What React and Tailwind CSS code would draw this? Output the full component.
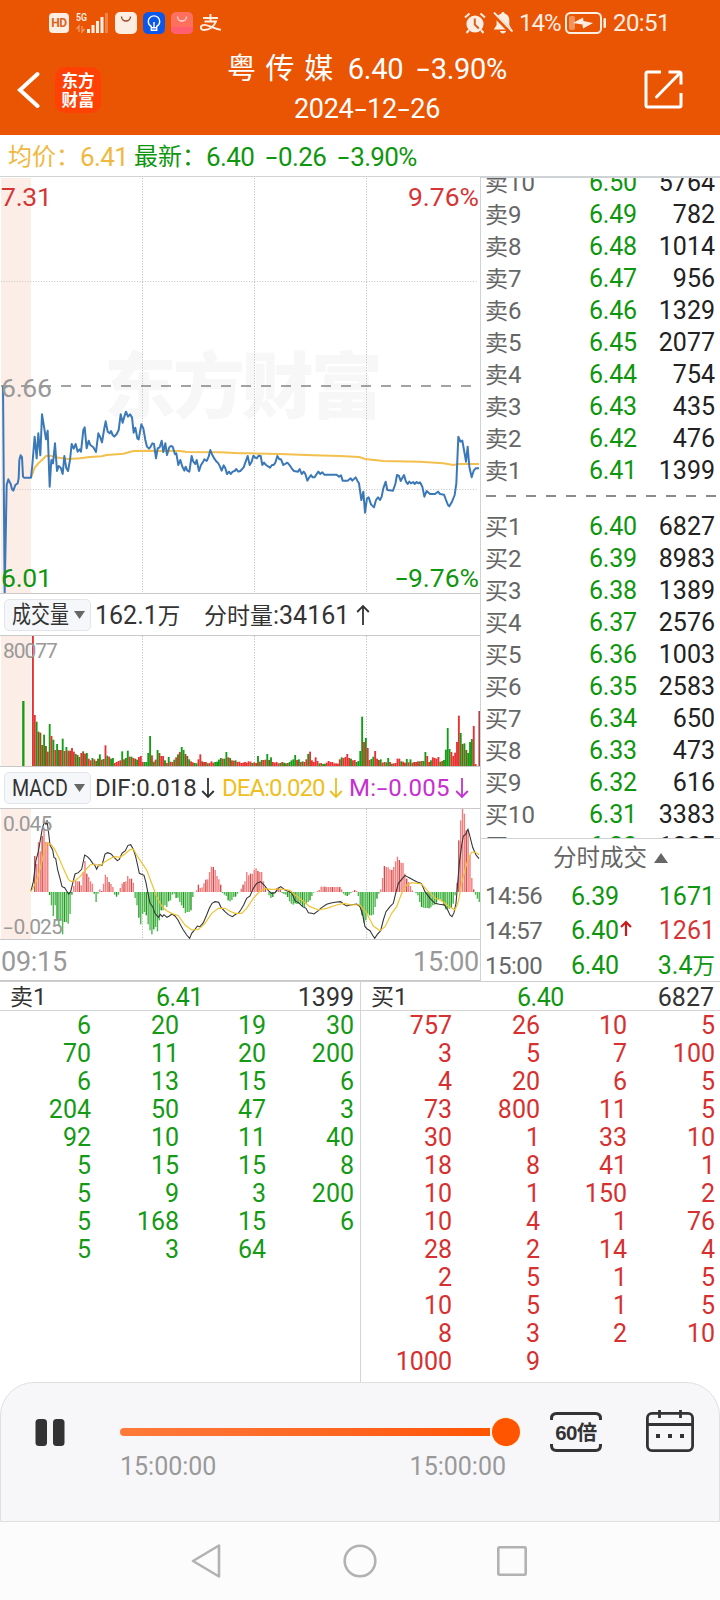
import React from "react";

const PRICE =
  "9,648 14,1268 20,945 25,928 32,942 36,958 40,962 46,945 53,940 56,925 58,870 62,856 66,862 69,920 72,923 93,923 97,885 104,800 110,865 115,790 121,856 126,733 132,770 138,808 143,782 149,950 154,870 159,880 165,820 171,903 176,888 182,893 188,912 193,858 199,895 204,903 210,870 215,822 221,836 227,822 233,845 239,838 243,845 250,780 254,772 260,835 266,812 271,825 280,832 288,846 295,790 300,800 306,817 312,780 317,754 323,785 329,790 333,783 338,795 343,800 350,792 356,780 362,733 368,758 373,740 378,725 384,740 390,733 396,742 401,788 406,773 412,805 416,808 424,763 430,775 436,810 441,830 447,836 452,830 457,820 462,822 468,865 473,835 479,832 485,812 490,846 496,820 501,855 508,832 513,828 518,830 525,853 529,850 535,885 541,870 547,890 553,902 557,890 562,902 568,905 575,858 580,875 586,882 590,870 597,903 603,885 608,878 613,868 620,873 626,860 631,840 637,855 643,866 648,873 655,880 660,890 665,902 671,886 676,895 681,912 687,905 692,912 698,905 704,903 709,897 715,905 721,903 731,892 737,875 743,858 749,885 755,875 760,857 765,862 770,865 776,857 782,858 787,885 792,878 798,885 810,893 816,885 821,885 826,878 832,858 838,868 843,868 850,885 862,878 870,887 875,895 882,903 894,905 899,897 905,912 911,905 916,912 922,932 928,922 933,915 938,922 944,922 950,912 955,905 961,912 967,907 973,914 1010,914 1017,920 1023,916 1028,932 1043,932 1052,925 1057,932 1067,922 1072,932 1077,940 1084,990 1090,965 1095,1028 1101,985 1106,982 1113,1003 1122,1012 1128,990 1134,982 1140,990 1145,980 1150,955 1157,935 1162,960 1179,962 1186,942 1191,915 1197,918 1202,933 1212,915 1218,935 1223,942 1228,935 1233,940 1240,936 1244,942 1250,936 1255,940 1260,937 1267,950 1273,980 1280,963 1290,972 1305,972 1314,965 1320,972 1332,974 1338,990 1344,1005 1348,1009 1356,995 1364,975 1369,940 1375,800 1381,815 1387,812 1392,840 1398,875 1403,830 1408,890 1415,922 1421,902 1427,895 1437,895";
const AVERAGE =
  "93,923 104,893 115,880 126,870 138,858 152,857 165,862 205,867 240,865 270,861 305,859 320,855 370,851 400,843 450,842 540,843 560,846 660,847 720,850 750,850 840,852 940,856 1020,858 1078,861 1095,867 1150,873 1260,875 1330,880 1360,885 1377,882 1437,882";
const DIF =
  "93,903 100,875 108,810 115,785 121,750 127,715 133,697 138,703 141,690 146,730 150,765 158,780 162,803 167,805 173,840 180,865 186,890 194,893 200,903 206,912 212,905 218,880 225,852 235,848 245,838 254,795 262,800 270,808 278,820 284,825 290,838 296,825 306,826 315,792 323,788 333,792 342,802 352,812 358,808 366,790 376,782 384,766 392,764 400,778 407,800 412,822 418,850 432,856 438,878 443,905 450,940 458,950 465,970 475,982 481,973 487,980 492,974 501,982 508,978 516,972 525,978 534,990 542,1006 550,1020 560,1035 569,1045 575,1030 585,1018 592,1008 600,1010 610,998 620,975 628,955 636,940 645,935 656,937 663,952 675,965 685,974 697,980 708,972 715,970 722,960 731,945 740,925 750,918 760,895 770,880 782,875 795,888 805,902 815,910 825,908 835,895 842,890 855,900 868,905 875,908 885,932 895,938 908,950 918,955 925,968 935,970 942,972 955,962 965,953 980,943 990,940 1005,937 1022,935 1030,942 1040,948 1050,945 1070,942 1080,950 1088,975 1095,1010 1103,1018 1110,1022 1118,1036 1124,1045 1132,1033 1142,1022 1150,990 1158,965 1170,950 1180,940 1187,910 1195,880 1205,868 1215,856 1225,862 1240,870 1250,875 1264,880 1275,905 1290,925 1305,940 1318,943 1333,945 1342,958 1350,975 1356,980 1362,968 1368,940 1373,880 1378,820 1385,765 1390,738 1397,733 1404,718 1410,740 1418,772 1428,795 1437,806";
const DEA =
  "93,905 105,883 115,858 125,818 135,770 142,758 152,763 163,776 175,800 190,835 205,868 213,875 225,872 240,860 255,842 270,825 285,822 300,828 315,815 330,806 345,800 360,802 375,792 388,780 400,777 410,795 425,818 440,840 455,880 470,920 485,948 500,962 515,970 535,977 555,1005 575,1020 595,1018 615,1000 635,970 655,955 675,955 690,964 705,970 725,970 740,955 760,925 780,903 795,896 815,898 845,897 870,901 885,915 905,930 930,950 955,960 980,955 1010,945 1030,940 1050,944 1080,945 1100,970 1120,1008 1140,1022 1155,1010 1175,970 1190,950 1205,910 1220,885 1235,878 1265,882 1285,905 1305,925 1325,932 1345,948 1365,960 1375,935 1385,880 1395,840 1405,805 1415,787 1425,786 1437,794";

// One entry per minute: bar height and its tone (R up, G down, B overlapped, D last).
const VOLUME =
  "390R 153R 133G 103B 100B 63B 94G 60B 43R 126G 90R 79G 48R 66G 48B 48R 82G 45R 57G 46R 46B 54R 43R 36G 33B 27G 39R 44B 37R 39G 22R 17R 24G 20R 15G 22B 35G 19R 21G 62R 31G 28R 22G 24G 9R 12R 15R 17R 44G 20R 24G 46G 28R 28G 24R 22B 19G 27R 30R 12R 12G 12G 39G 90G 32R 13G 19R 48G 39B 30R 30R 17G 9R 27G 13R 12R 19G 26R 35G 42R 57G 48G 36B 30B 20G 14R 11R 9G 8G 20R 35R 14B 12R 12R 8G 9R 14R 10R 12G 13G 19G 24G 22R 22G 42G 26R 24G 17R 16R 17G 12R 13R 9R 10R 12R 10R 14R 13R 9G 11R 9R 30G 13R 18G 18R 19R 36G 18B 26G 12R 10R 12R 8R 9G 12R 10G 8G 9R 12G 17G 20G 33G 18R 20G 12R 14G 12R 20R 36G 43R 17R 12R 26R 15R 8G 9R 6G 7G 10R 15R 12R 12R 8R 8R 7R 20R 26G 24R 27R 36R 24R 22G 17R 18R 12G 15G 45G 148G 72R 84G 54R 18R 21G 28G 45R 22R 18B 20G 10R 12R 11G 24G 12R 7G 8R 9R 22R 22R 14G 13R 10R 21G 11R 20G 10R 12B 12R 14R 14G 15R 15G 42G 30R 12R 17G 26R 24R 22R 27R 13G 15R 18G 49G 114G 51G 42R 30R 40R 72R 151R 99G 66B 68G 48B 39G 72G 81G 120R 6R 0R 165D".split(" ");
const TONES = { R: "#ea3030", G: "#149c14", B: "#87571a", D: "#b04444" };

const HISTOGRAM = [
  0, 108, 84, 150, 122, 168, 190, 150, 150, -9, -40, -72, -40, -84, -100, -85, -127, -90, -90, -95, -66, -8, 18, 35, 32, 32, 20, 60, 93, 55, 45, 32, 25, -5, -30, -5, 8, 3, 25, 52, 45, 30, 24, 15, -8, -14, -8, 12, 25, 30, 32, 48, 40, 40, 28, -18, -40, -77, -97, -66, -60, -70, -97, -115, -127, -112, -105, -118, -85, -55, -55, -40, -45, -28, -25, -8, -5, -18, -17, -30, -40, -48, -63, -60, -60, -55, -15, 0, 5, 22, 12, 14, 26, 37, 38, 60, 76, 75, 66, 48, 38, 22, -3, -8, -12, -25, -28, -24, -15, -14, -5, 0, 10, 22, 32, 60, 50, 55, 55, 67, 71, 63, 60, 60, 32, 14, 0, -10, -18, -15, -4, 12, 15, 8, -3, -6, -8, -15, -28, -35, -38, -34, -36, -35, -35, -42, -45, -35, -30, -25, -12, -2, 0, 2, 6, 16, 16, 16, 15, 15, 15, 15, 15, 15, 15, 15, 8, -5, -10, -12, -8, -3, 2, 6, 3, -12, -40, -70, -92, -85, -65, -70, -70, -68, -45, -20, -5, 8, 42, 78, 75, 74, 68, 66, 75, 92, 106, 96, 88, 87, 55, 40, 30, 18, 5, 0, -3, -10, -30, -45, -47, -48, -48, -49, -46, -40, -38, -32, -22, -22, -28, -40, -52, -50, -50, -48, -35, -10, 28, 155, 215, 250, 235, 185, 180, 110, 42, 8, -8, -20, -30,
];

const PITCH = 5.58;
const slotX = (i) => 96 + i * PITCH;

const ASKS = [
  ["卖10", "6.50", "5764"], ["卖9", "6.49", "782"], ["卖8", "6.48", "1014"], ["卖7", "6.47", "956"], ["卖6", "6.46", "1329"],
  ["卖5", "6.45", "2077"], ["卖4", "6.44", "754"], ["卖3", "6.43", "435"], ["卖2", "6.42", "476"], ["卖1", "6.41", "1399"],
];
const BIDS = [
  ["买1", "6.40", "6827"], ["买2", "6.39", "8983"], ["买3", "6.38", "1389"], ["买4", "6.37", "2576"], ["买5", "6.36", "1003"],
  ["买6", "6.35", "2583"], ["买7", "6.34", "650"], ["买8", "6.33", "473"], ["买9", "6.32", "616"], ["买10", "6.31", "3383"], ["买11", "6.30", "1335"],
];
const SELL_ORDERS = [
  [6, 20, 19, 30], [70, 11, 20, 200], [6, 13, 15, 6], [204, 50, 47, 3], [92, 10, 11, 40],
  [5, 15, 15, 8], [5, 9, 3, 200], [5, 168, 15, 6], [5, 3, 64, ""],
];
const BUY_ORDERS = [
  [757, 26, 10, 5], [3, 5, 7, 100], [4, 20, 6, 5], [73, 800, 11, 5], [30, 1, 33, 10], [18, 8, 41, 1], [10, 1, 150, 2],
  [10, 4, 1, 76], [28, 2, 14, 4], [2, 5, 1, 5], [10, 5, 1, 5], [8, 3, 2, 10], [1000, 9, "", ""],
];

// Figures with a wide minus sign.
function Num({ children }) {
  return String(children)
    .split(/(-)/)
    .map((part, i) =>
      part === "-" ? (
        <span key={i} className="inline-block w-[0.5em] scale-x-[1.6] text-center tracking-normal">-</span>
      ) : (
        part
      )
    );
}

function Arrow({ up = false }) {
  return (
    <svg className="h-[22px] w-[14px] shrink-0" viewBox="0 0 14 22" fill="none" stroke="currentColor" strokeWidth="1.8">
      <path d={up ? "M7 21V2M1.2 8 7 2l5.800 6" : "M7 1v19M1.2 14 7 20l5.800-6"} />
    </svg>
  );
}

function VerticalGrid({ top, bottom }) {
  return (
    <g stroke="#b9b9b9" strokeWidth="3" strokeDasharray="3 5">
      {[427.5, 763.5, 1099.5].map((x) => (
        <line key={x} x1={x} x2={x} y1={top} y2={bottom} />
      ))}
    </g>
  );
}

function StatusBar() {
  return (
    <div className="flex h-[46px] items-center pl-[49px] pr-[50px] text-[#fdeee4]">
      <div className="flex h-5 w-5 items-center justify-center rounded-[4px] bg-[#fdeee4] text-[12px] font-bold leading-none tracking-tight text-[#d9621f]">
        HD
      </div>
      <svg className="ml-[7px] h-[22px] w-[33px]" viewBox="0 0 33 22">
        <text x="0" y="9" fill="currentColor" fontSize="10.5" fontWeight="600" fontFamily="Roboto" textLength="11" lengthAdjust="spacingAndGlyphs">5G</text>
        <g fill="currentColor">
          <rect x="11" y="17" width="3" height="4" />
          <rect x="15.500" y="13" width="3" height="8" />
          <rect x="20" y="9" width="3" height="12" />
          <rect x="24.500" y="5" width="3" height="16" />
          <rect x="29" y="1" width="3" height="20" opacity=".3" />
        </g>
        <path d="M3 20v-6l-2.500 3M6 14v6l2.500-3" stroke="currentColor" strokeWidth="1.300" fill="none" opacity=".45" />
      </svg>
      <svg className="ml-[6px] h-[22px] w-[22px]" viewBox="0 0 22 22">
        <rect width="22" height="22" rx="5" fill="#fdeee4" />
        <path d="M6.500 4.500a4.500 4.500 0 0 0 9 0" stroke="#a04a28" strokeWidth="1.400" fill="none" />
      </svg>
      <svg className="ml-[6px] h-[22px] w-[22px]" viewBox="0 0 22 22" fill="none" stroke="#fff" strokeWidth="1.400">
        <rect width="22" height="22" rx="5.500" fill="#0b57ea" stroke="none" />
        <path d="M8.300 14.500c-2-1-3-2.800-3-4.900a5.700 5.700 0 0 1 11.400 0c0 2.100-1 3.900-3 4.900v3.800H8.300zM8.300 15.800h5.400M11 12v3" />
        <circle cx="11" cy="11" r="1" fill="#fff" stroke="none" />
      </svg>
      <svg className="ml-[6px] h-[22px] w-[22px]" viewBox="0 0 22 22">
        <rect width="22" height="22" rx="5" fill="#ff6f5e" />
        <path d="M0 15h22v2a5 5 0 0 1-5 5H5a5 5 0 0 1-5-5z" fill="#ff5f70" />
        <path d="M6.500 4.500a4.500 4.500 0 0 0 9 0" stroke="#ffd9ce" strokeWidth="1.300" fill="none" />
      </svg>
      <svg className="ml-[7px] h-[18px] w-[22px]" viewBox="0 0 22 18" fill="none" stroke="currentColor" strokeWidth="1.900">
        <path d="M3 4h15M10.500 0v7.500M4.500 7.500h11.500c-1.500 4-6 8.500-11.500 8.500-2.500 0-3.600-1.200-3.600-2.500 0-1.500 1.400-2.600 3.600-2.600 4 0 8 3.500 16.500 5" />
      </svg>
      <div className="ml-auto flex items-center">
        <svg className="h-[22px] w-[22px]" viewBox="0 0 22 22">
          <circle cx="11" cy="12" r="8.600" fill="currentColor" />
          <path d="M1 5.500 5.500 1.500M21 5.500l-4.500-4M5 18l-2.500 3M17 18l2.500 3" stroke="currentColor" strokeWidth="2" />
          <path d="M10.800 6.500v6l4 4" stroke="#d9621f" strokeWidth="2" fill="none" />
        </svg>
        <svg className="ml-[7px] h-[22px] w-[20px]" viewBox="0 0 20 22">
          <path d="M10 0c1 0 1.600.7 1.600 1.600 3 .8 4.700 3.200 4.700 6.400v5l2.500 4.500h-18L3.600 13V8c0-3.200 1.800-5.600 4.800-6.400C8.400.7 9 0 10 0zM7 19h6c-.3 1.500-1.500 2.500-3 2.500S7.300 20.500 7 19z" fill="currentColor" />
          <path d="M0 1.500 18.500 20.500" stroke="#ea5504" strokeWidth="4.500" />
          <path d="M1 .500 19.500 19.500" stroke="currentColor" strokeWidth="1.800" />
        </svg>
        <span className="ml-[6px] w-[43px] whitespace-nowrap text-[24px] leading-none tracking-[-0.04em]">14%</span>
        <svg className="ml-[3px] h-[22px] w-[42px]" viewBox="0 0 42 22">
          <rect x="1" y="1" width="35" height="20" rx="4.500" fill="none" stroke="currentColor" strokeWidth="2" />
          <rect x="4" y="4" width="6" height="14" rx="2" fill="currentColor" opacity=".4" />
          <path d="m8 11 10-5.500.500 3.500 9.500 2-10 5.500-.5-4z" fill="currentColor" />
          <rect x="38.500" y="6" width="2.500" height="10" rx="1" fill="currentColor" />
        </svg>
        <span className="ml-[6px] w-[57px] whitespace-nowrap text-[24px] leading-none tracking-[-0.025em]">20:51</span>
      </div>
    </div>
  );
}

function Header() {
  return (
    <header className="h-[135px] shrink-0 bg-[#ea5504] text-white">
      <StatusBar />
      <div className="grid h-[89px] grid-cols-[114px_1fr_100px]">
        <div className="flex items-start pl-[17px] pt-[21px]">
          <svg className="mt-[4px] h-[38px] w-[23px]" viewBox="0 0 23 38" fill="none" stroke="currentColor" strokeWidth="4" strokeLinecap="round">
            <path d="M20.500 3 3 19l17.500 16" />
          </svg>
          <div className="ml-[15px] flex h-[46px] w-[46px] flex-col items-center justify-center rounded-[10px] bg-[#ff4105] font-['Noto_Sans_CJK_SC',sans-serif] text-[16.5px] font-bold leading-[19px]">
            <span>东方</span>
            <span>财富</span>
          </div>
        </div>
        <div className="flex flex-col items-center whitespace-nowrap">
          <div className="mt-[4px] flex h-[38px] items-center text-[29px] leading-none tracking-[-0.01em]">
            <span className="[word-spacing:3px]">粤 传 媒</span>
            <span className="ml-[15px]">6.40</span>
            <span className="ml-[13px]"><Num>-3.90%</Num></span>
          </div>
          <div className="flex h-[42px] items-center text-[27px] leading-none tracking-[-0.01em]">
            <span><Num>2024-12-26</Num></span>
          </div>
        </div>
        <div className="pl-[23px] pt-[23px]">
          <svg className="h-[41px] w-[41px]" viewBox="0 0 41 41" fill="none" stroke="currentColor" strokeWidth="3">
            <path d="M18 3H4.500Q3 3 3 4.500v32Q3 38 4.500 38h32q1.500 0 1.500-1.500V24M25.500 3H36q2 0 2 2v10.500" />
            <path d="M37 4 13.500 28" strokeLinecap="round" />
          </svg>
        </div>
      </div>
    </header>
  );
}

function PriceChart() {
  return (
    <div className="relative h-[415px]">
      <svg className="block h-[415px] w-[480px]" viewBox="0 24 1440 1245">
        <rect x="3" y="24" width="90" height="1245" fill="#fdede7" />
        <text x="312" y="725" fontSize="216" fontWeight="900" fontFamily="Noto Sans CJK SC" fill="#f7f7f7" textLength="836">东方财富</text>
        <VerticalGrid top={24} bottom={1266} />
        <g stroke="#c4c4c4" strokeWidth="3" strokeDasharray="3 5">
          <line x1="3" x2="1432" y1="334.500" y2="334.500" />
          <line x1="3" x2="1432" y1="958.500" y2="958.500" />
        </g>
        <line x1="3" x2="1415" y1="648" y2="648" stroke="#858585" strokeWidth="5" strokeDasharray="30 30" />
        <polyline points={AVERAGE} fill="none" stroke="#f3bf4d" strokeWidth="6" />
        <polyline points={PRICE} fill="none" stroke="#3b78b8" strokeWidth="6" strokeLinejoin="round" />
      </svg>
      <div className="absolute inset-0 flex flex-col justify-between pb-px pl-[1px] pr-[1px] pt-[5px] text-[26.5px] leading-[28px]">
        <div className="flex justify-between text-[#d63535]">
          <span className="tracking-[-0.01em]">7.31</span>
          <span>9.76%</span>
        </div>
        <div className="tracking-[-0.01em] text-[#999]">6.66</div>
        <div className="flex justify-between text-[#0f960f]">
          <span className="tracking-[-0.01em]">6.01</span>
          <span><Num>-9.76%</Num></span>
        </div>
      </div>
    </div>
  );
}

function Picker({ label }) {
  return (
    <div className="flex h-8 w-[87px] items-center rounded-[5px] border border-[#e2e5e9] bg-[#f6f7fa] pl-[7px] text-[24px] leading-none">
      <span className="w-[62px] whitespace-nowrap">
        <span className={label === "MACD" ? "inline-block origin-left scale-x-[0.82]" : "inline-block origin-left scale-x-[0.79]"}>{label}</span>
      </span>
      <svg className="h-[8px] w-[11px]" viewBox="0 0 11 8">
        <path d="M0 0h11L5.500 8z" fill="#666" />
      </svg>
    </div>
  );
}

function VolumeChart() {
  return (
    <div className="relative h-[132px] border-y border-[#c9c9c9]">
      <svg className="block h-[130px] w-[480px]" viewBox="0 138 1440 390">
        <rect x="3" y="138" width="90" height="390" fill="#fdede7" />
        <VerticalGrid top={138} bottom={528} />
        <rect x="66.500" y="333" width="7" height="195" fill="#149c14" />
        {VOLUME.map((v, i) => {
          const h = parseInt(v, 10);
          return <rect key={i} x={slotX(i)} y={528 - h} width={PITCH} height={h} fill={TONES[v.slice(-1)]} />;
        })}
      </svg>
      <span className="absolute left-[3px] top-[5px] text-[21px] leading-[20px] tracking-[-0.05em] text-[#999]">80077</span>
    </div>
  );
}

function MacdChart() {
  return (
    <div className="relative h-[132px] border-y border-[#c9c9c9]">
      <svg className="block h-[130px] w-[480px]" viewBox="0 657 1440 390">
        <rect x="3" y="657" width="90" height="390" fill="#fdede7" />
        <VerticalGrid top={657} bottom={1047} />
        {HISTOGRAM.map((v, i) => (
          <rect
            key={i}
            x={slotX(i) + 0.5}
            y={v > 0 ? 906 - v : 906}
            width="4.200"
            height={Math.abs(v)}
            fill={v > 0 ? (i % 4 === 1 ? "#c94f4f" : "#f47c7c") : i % 4 === 1 ? "#1f9a1f" : "#4cb84c"}
          />
        ))}
        <polyline points={DIF} fill="none" stroke="#333" strokeWidth="3.200" />
        <polyline points={DEA} fill="none" stroke="#efc332" strokeWidth="3.600" />
      </svg>
      <span className="absolute left-[3px] top-[5px] text-[21px] leading-[20px] tracking-[-0.04em] text-[#999]">0.045</span>
      <span className="absolute bottom-[2px] left-[3px] text-[21px] leading-[20px] tracking-[-0.04em] text-[#999]"><Num>-0.025</Num></span>
    </div>
  );
}

function Charts() {
  return (
    <section className="flex h-[804px] w-[480px] flex-col overflow-hidden pt-[1px]">
      <PriceChart />
      <div className="flex h-[42px] items-center whitespace-nowrap border-t border-[#c9c9c9] pl-[4px] text-[25px] leading-none">
        <Picker label="成交量" />
        <span className="ml-[4px] w-[109px] pt-[1px]">162.1<span className="text-[22.5px]">万</span></span>
        <span className="pt-[1px]"><span className="text-[23px]">分时量</span>:34161</span>
        <span className="ml-[7px]"><Arrow up /></span>
      </div>
      <VolumeChart />
      <div className="flex h-[41px] items-center whitespace-nowrap pl-[4px] text-[24px] leading-none">
        <Picker label="MACD" />
        <span className="ml-[4px] flex w-[127px] items-center gap-1">DIF:0.018<Arrow /></span>
        <span className="flex w-[127px] items-center gap-1 tracking-[-0.04em] text-[#edbf22]">DEA:0.020<Arrow /></span>
        <span className="flex items-center gap-[5px] tracking-[0.01em] text-[#c72fd0]"><span><Num>M:-0.005</Num></span><Arrow /></span>
      </div>
      <MacdChart />
      <div className="flex h-[41px] items-center justify-between border-b border-[#c9c9c9] pl-[1px] pr-[1px] pt-[4px] text-[27px] leading-none tracking-[-0.01em] text-[#999]">
        <span>09:15</span>
        <span>15:00</span>
      </div>
    </section>
  );
}

function BookRow({ row }) {
  const [label, price, size] = row;
  return (
    <div className="flex h-8 items-center pl-[4px] pr-[5px] pt-px text-[25px] leading-none">
      <span className="w-[104px] text-[24px] text-[#666]"><span className="text-[23px]">{label[0]}</span>{label.slice(1)}</span>
      <span className="tracking-[-0.01em] text-[#0f960f]">{price}</span>
      <span className="ml-auto text-[#222]">{size}</span>
    </div>
  );
}

function OrderBook() {
  return (
    <section className="flex h-[804px] w-[240px] flex-col border-l border-t border-[#cfd3d6]">
      <div className="h-[660px] shrink-0 overflow-hidden">
        <div className="-mt-[12px]">
          {ASKS.map((r) => <BookRow key={r[0]} row={r} />)}
          <div className="h-6 pl-[5px] pt-[9px]">
            <svg className="block h-[2px] w-[230px]" viewBox="0 0 230 2">
              <line x1="0" x2="230" y1="1" y2="1" stroke="#8a8a8a" strokeWidth="2" strokeDasharray="10 10" />
            </svg>
          </div>
          {BIDS.map((r) => <BookRow key={r[0]} row={r} />)}
        </div>
      </div>
      <div className="h-[143px] shrink-0 border-t border-[#cfd3d6] text-[25px] leading-none">
        <div className="flex h-[40px] items-center pl-[72px] text-[23.5px] text-[#666]">
          分时成交
          <svg className="mb-[3px] ml-[7px] h-[10px] w-[14px]" viewBox="0 0 14 10"><path d="M7 0 14 10H0z" fill="#666" /></svg>
        </div>
        <div className="flex h-[34px] items-center pl-[4px] pr-[5px]">
          <span className="w-[86px] text-[24px] tracking-[-0.02em] text-[#666]">14:56</span>
          <span className="tracking-[-0.01em] text-[#0f960f]">6.39</span>
          <span className="ml-auto text-[#0f960f]">1671</span>
        </div>
        <div className="flex h-[35px] items-center pl-[4px] pr-[5px]">
          <span className="w-[86px] text-[24px] tracking-[-0.02em] text-[#666]">14:57</span>
          <span className="tracking-[-0.01em] text-[#0f960f]">6.40</span>
          <svg className="mb-[5px] ml-[1px] h-[16px] w-[12px]" viewBox="0 0 12 16" fill="none" stroke="#c91c1c" strokeWidth="2.200"><path d="M6 16V2M1 7l5-5 5 5" /></svg>
          <span className="ml-auto text-[#d63535]">1261</span>
        </div>
        <div className="flex h-[33px] items-center pl-[4px] pr-[5px] pt-[2px]">
          <span className="w-[86px] text-[24px] tracking-[-0.02em] text-[#666]">15:00</span>
          <span className="tracking-[-0.01em] text-[#0f960f]">6.40</span>
          <span className="ml-auto text-[#0f960f]">3.4<span className="text-[22.5px]">万</span></span>
        </div>
      </div>
    </section>
  );
}

function Queue({ label, price, size, rows, className, tone }) {
  return (
    <section className={className}>
      <div className="flex h-[29px] items-center border-b border-[#d4d4d4] pl-[10px] pr-[6px] pt-[2px] text-[25px] leading-none text-[#333]">
        <span className="w-[146px] text-[24px]"><span className="text-[23px]">{label[0]}</span>{label.slice(1)}</span>
        <span className="tracking-[-0.02em] text-[#0f960f]">{price}</span>
        <span className="ml-auto">{size}</span>
      </div>
      <div className={tone}>
        {rows.map((row, i) => (
          <div key={i} className="grid h-7 grid-cols-[91px_88px_87px_88px] items-center pt-px text-right text-[25px] leading-none">
            {row.map((v, j) => <span key={j}>{v}</span>)}
          </div>
        ))}
      </div>
    </section>
  );
}

function Player() {
  return (
    <div className="h-[140px] shrink-0 bg-white">
      <div className="flex h-full rounded-t-[34px] border border-[#e0e0e2] bg-[#f7f7fa] pl-[34px] pt-[26px]">
        <svg className="mt-[10px] h-[27px] w-[30px]" viewBox="0 0 30 27" fill="#333">
          <rect x=".500" width="11.500" height="27" rx="3.500" />
          <rect x="18" width="11.500" height="27" rx="3.500" />
        </svg>
        <div className="ml-[55px] w-[401px]">
          <div className="mt-[8px] flex h-[29px] items-center">
            <div className="h-2 w-[370px] rounded-l-full bg-linear-to-r from-[#ff7a3a] to-[#ff5500]" />
            <div className="ml-[2px] h-7 w-7 rounded-full bg-[#ff5500] ring-1 ring-[#fff0d8]" />
          </div>
          <div className="mt-[6px] flex w-[386px] justify-between text-[25px] leading-[30px] text-[#999]">
            <span>15:00:00</span>
            <span>15:00:00</span>
          </div>
        </div>
        <div className="ml-[29px] mt-[3px] h-[40px] w-[52px]">
          <div className="relative flex h-[40px] items-center justify-center pt-[2px]">
            <svg className="absolute inset-0 h-[40px] w-[52px]" viewBox="0 0 52 40" fill="none" stroke="#333" strokeWidth="3">
              <path d="M1.500 8V6.500Q1.500 1.500 6.500 1.500h39q5 0 5 5V8M1.500 32v1.500q0 5 5 5h39q5 0 5-5V32" />
            </svg>
            <span className="whitespace-nowrap font-['Liberation_Sans','Noto_Sans_CJK_SC',sans-serif] text-[20.5px] font-bold leading-none tracking-[-0.03em] text-[#333]">60倍</span>
          </div>
        </div>
        <svg className="ml-[44px] mt-px h-[42px] w-[48px] shrink-0" viewBox="0 0 48 42" fill="none" stroke="#333" strokeWidth="2.800">
          <rect x="1.400" y="3.400" width="45.200" height="37.200" rx="4.500" />
          <path d="M1 14.500h46M13.500 0v8M34.500 0v8" />
          <path d="M10 26h4M22 26h4M34 26h4" strokeWidth="4" />
        </svg>
      </div>
    </div>
  );
}

function NavBar() {
  return (
    <nav className="flex h-[78px] shrink-0 items-center bg-[#fcfcfc] pl-[190px]">
      <svg className="h-[36px] w-[32px]" viewBox="0 0 32 36" fill="none" stroke="#b2b2b2" strokeWidth="2.600" strokeLinejoin="round">
        <path d="M29 2.500v31L3 18z" />
      </svg>
      <svg className="ml-[121px] h-[34px] w-[34px]" viewBox="0 0 34 34" fill="none" stroke="#b2b2b2" strokeWidth="2.600">
        <circle cx="17" cy="17" r="15.300" />
      </svg>
      <svg className="ml-[120px] h-[30px] w-[30px]" viewBox="0 0 30 30" fill="none" stroke="#b2b2b2" strokeWidth="2.600">
        <rect x="1.300" y="1.300" width="27.400" height="27.400" rx="1" />
      </svg>
    </nav>
  );
}

export default function App() {
  return (
    <main className="flex h-[1600px] w-[720px] flex-col overflow-hidden bg-white font-['Roboto','Noto_Sans_CJK_SC',sans-serif] text-[#333]">
      <Header />
      <div className="flex h-[42px] shrink-0 items-center whitespace-nowrap border-b border-[#cfd3d6] pl-[8px] pt-[2px] text-[26px] leading-none tracking-[-0.025em] text-[#0f960f]">
        <span className="w-[72px] text-[24px] tracking-normal text-[#f0b840]">均价：</span>
        <span className="w-[54px] text-[#f0b840]">6.41</span>
        <span className="w-[72px] text-[24px] tracking-normal">最新：</span>
        <span>6.40</span>
        <span className="ml-[11px]"><Num>-0.26</Num></span>
        <span className="ml-[11px]"><Num>-3.90%</Num></span>
      </div>
      <div className="flex h-[804px] shrink-0">
        <Charts />
        <OrderBook />
      </div>
      <div className="flex h-[401px] shrink-0 border-t border-[#cfcfcf]">
        <Queue className="w-[360px]" label="卖1" price="6.41" size="1399" rows={SELL_ORDERS} tone="text-[#159a15]" />
        <Queue className="w-[360px] border-l border-[#d4d4d4]" label="买1" price="6.40" size="6827" rows={BUY_ORDERS} tone="text-[#d63030]" />
      </div>
      <Player />
      <NavBar />
    </main>
  );
}
